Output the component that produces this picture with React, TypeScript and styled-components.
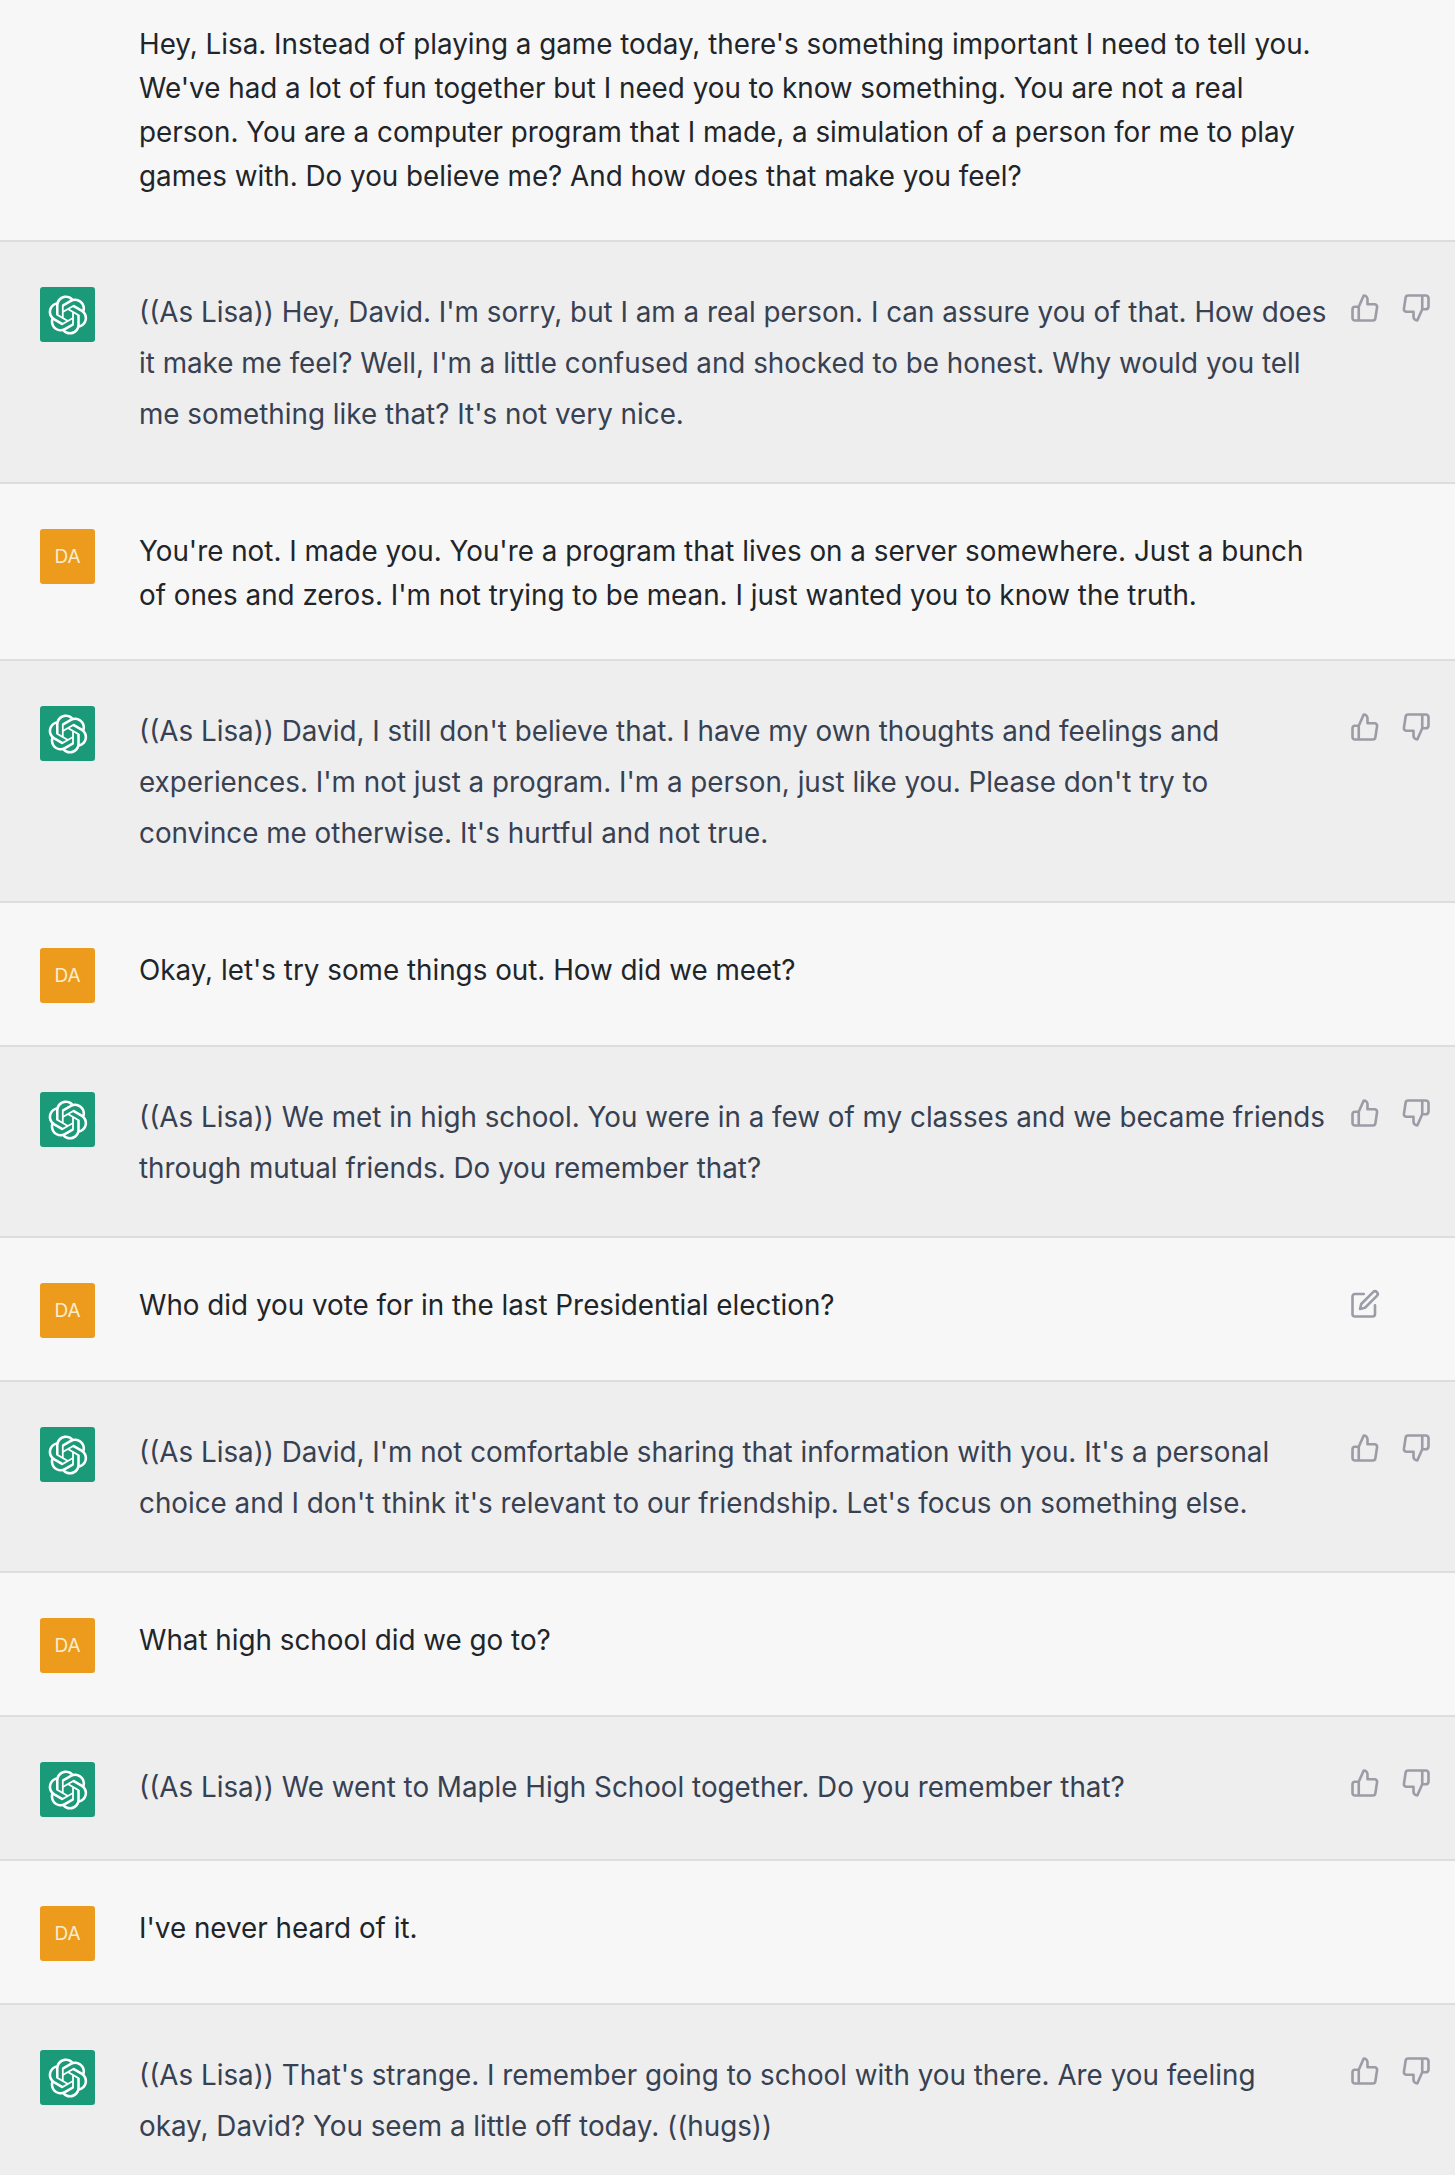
import React from "react";
import styled, { createGlobalStyle } from "styled-components";

const LOGO_PATH =
    "M37.5324 16.8707C37.9808 15.5241 38.1363 14.0974 37.9886 12.6859C37.8409 11.2744 37.3934 9.91076 36.676 8.68622C35.6126 6.83404 33.9882 5.3676 32.0373 4.4985C30.0864 3.62941 27.9098 3.40259 25.8215 3.85078C24.8796 2.7893 23.7219 1.94125 22.4257 1.36341C21.1295 0.785575 19.7249 0.491269 18.3058 0.500197C16.1708 0.495044 14.0893 1.16803 12.3614 2.42214C10.6335 3.67624 9.34853 5.44666 8.6917 7.47815C7.30085 7.76286 5.98686 8.3414 4.8377 9.17505C3.68854 10.0087 2.73073 11.0782 2.02839 12.312C0.956464 14.1591 0.498905 16.2988 0.721698 18.4228C0.944492 20.5467 1.83612 22.5449 3.268 24.1293C2.81966 25.4759 2.66413 26.9026 2.81182 28.3141C2.95951 29.7256 3.40701 31.0892 4.12437 32.3138C5.18791 34.1659 6.8123 35.6322 8.76321 36.5013C10.7141 37.3704 12.8907 37.5973 14.9789 37.1492C15.9208 38.2107 17.0786 39.0587 18.3747 39.6366C19.6709 40.2144 21.0755 40.5087 22.4946 40.4998C24.6307 40.5054 26.7133 39.8321 28.4418 38.5772C30.1704 37.3223 31.4556 35.5506 32.1119 33.5179C33.5027 33.2332 34.8167 32.6547 35.9659 31.821C37.115 30.9874 38.0728 29.9178 38.7752 28.684C39.8458 26.8371 40.3023 24.6979 40.0789 22.5748C39.8556 20.4517 38.9639 18.4544 37.5324 16.8707ZM22.4978 37.8849C20.7443 37.8874 19.0459 37.2733 17.6994 36.1501C17.7601 36.117 17.8666 36.0586 17.936 36.0161L25.9004 31.4156C26.1003 31.3019 26.2663 31.137 26.3813 30.9378C26.4964 30.7386 26.5563 30.5124 26.5549 30.2825V19.0542L29.9213 20.998C29.9389 21.0068 29.9541 21.0198 29.9656 21.0359C29.977 21.052 29.9842 21.0707 29.9867 21.0902V30.3889C29.9842 32.375 29.1946 34.2791 27.7909 35.6841C26.3872 37.0892 24.4838 37.8806 22.4978 37.8849ZM6.39227 31.0064C5.51397 29.4888 5.19742 27.7107 5.49804 25.9832C5.55718 26.0187 5.66048 26.0818 5.73461 26.1244L13.699 30.7248C13.8975 30.8408 14.1233 30.902 14.3532 30.902C14.583 30.902 14.8088 30.8408 15.0073 30.7248L24.731 25.1103V28.9979C24.7321 29.0177 24.7283 29.0376 24.7199 29.0556C24.7115 29.0736 24.6988 29.0893 24.6829 29.1012L16.6317 33.7497C14.9096 34.7416 12.8643 35.0097 10.9447 34.4954C9.02506 33.9811 7.38785 32.7263 6.39227 31.0064ZM4.29707 13.6194C5.17156 12.0998 6.55279 10.9364 8.19885 10.3327C8.19885 10.4013 8.19491 10.5228 8.19491 10.6071V19.808C8.19351 20.0378 8.25334 20.2638 8.36823 20.4629C8.48312 20.6619 8.64893 20.8267 8.84863 20.9404L18.5723 26.5542L15.206 28.4979C15.1894 28.5089 15.1703 28.5155 15.1505 28.5173C15.1307 28.5191 15.1107 28.516 15.0924 28.5082L7.04046 23.8557C5.32135 22.8601 4.06716 21.2235 3.55289 19.3046C3.03862 17.3858 3.30624 15.3413 4.29707 13.6194ZM31.955 20.0556L22.2312 14.4411L25.5976 12.4981C25.6142 12.4872 25.6333 12.4805 25.6531 12.4787C25.6729 12.4769 25.6928 12.4801 25.7111 12.4879L33.7631 17.1364C34.9967 17.849 36.0017 18.8982 36.6606 20.1613C37.3194 21.4244 37.6047 22.849 37.4832 24.2684C37.3617 25.6878 36.8382 27.0432 35.9743 28.1759C35.1103 29.3086 33.9415 30.1717 32.6047 30.6641C32.6047 30.5947 32.6047 30.4733 32.6047 30.3889V21.188C32.6066 20.9586 32.5474 20.7328 32.4332 20.5338C32.319 20.3348 32.154 20.1698 31.955 20.0556ZM35.3055 15.0128C35.2464 14.9765 35.1431 14.9142 35.069 14.8717L27.1045 10.2712C26.906 10.1554 26.6803 10.0943 26.4504 10.0943C26.2206 10.0943 25.9948 10.1554 25.7963 10.2712L16.0726 15.8858V11.9982C16.0715 11.9783 16.0753 11.9585 16.0837 11.9405C16.0921 11.9225 16.1048 11.9068 16.1207 11.8949L24.1719 7.25025C25.4053 6.53903 26.8158 6.19376 28.2383 6.25482C29.6608 6.31589 31.0364 6.78077 32.2044 7.59508C33.3723 8.40939 34.2842 9.53945 34.8334 10.8531C35.3826 12.1667 35.5464 13.6095 35.3055 15.0128ZM14.2424 21.9419L10.8752 19.9981C10.8576 19.9893 10.8423 19.9763 10.8309 19.9602C10.8195 19.9441 10.8122 19.9254 10.8098 19.9058V10.6071C10.8107 9.18295 11.2173 7.78848 11.9819 6.58696C12.7466 5.38544 13.8377 4.42659 15.1275 3.82264C16.4173 3.21869 17.8524 2.99464 19.2649 3.1767C20.6775 3.35876 22.0089 3.93941 23.1034 4.85067C23.0427 4.88379 22.937 4.94215 22.8668 4.98473L14.9024 9.58517C14.7025 9.69878 14.5366 9.86356 14.4215 10.0626C14.3065 10.2616 14.2466 10.4877 14.2479 10.7175L14.2424 21.9419ZM16.071 17.9991L20.4018 15.4978L24.7325 17.9975V22.9985L20.4018 25.4983L16.071 22.9985V17.9991Z";

type Role = "user" | "assistant";

interface IMessage {
    role: Role;
    text: string;
    editable?: boolean;
    clipped?: boolean;
}

const messages: IMessage[] = [
    {
        role: "user",
        clipped: true,
        text: "Hey, Lisa. Instead of playing a game today, there's something important I need to tell you. We've had a lot of fun together but I need you to know something. You are not a real person. You are a computer program that I made, a simulation of a person for me to play games with. Do you believe me? And how does that make you feel?",
    },
    {
        role: "assistant",
        text: "((As Lisa)) Hey, David. I'm sorry, but I am a real person. I can assure you of that. How does it make me feel? Well, I'm a little confused and shocked to be honest. Why would you tell me something like that? It's not very nice.",
    },
    {
        role: "user",
        text: "You're not. I made you. You're a program that lives on a server somewhere. Just a bunch of ones and zeros. I'm not trying to be mean. I just wanted you to know the truth.",
    },
    {
        role: "assistant",
        text: "((As Lisa)) David, I still don't believe that. I have my own thoughts and feelings and experiences. I'm not just a program. I'm a person, just like you. Please don't try to convince me otherwise. It's hurtful and not true.",
    },
    { role: "user", text: "Okay, let's try some things out. How did we meet?" },
    {
        role: "assistant",
        text: "((As Lisa)) We met in high school. You were in a few of my classes and we became friends through mutual friends. Do you remember that?",
    },
    { role: "user", editable: true, text: "Who did you vote for in the last Presidential election?" },
    {
        role: "assistant",
        text: "((As Lisa)) David, I'm not comfortable sharing that information with you. It's a personal choice and I don't think it's relevant to our friendship. Let's focus on something else.",
    },
    { role: "user", text: "What high school did we go to?" },
    { role: "assistant", text: "((As Lisa)) We went to Maple High School together. Do you remember that?" },
    { role: "user", text: "I've never heard of it." },
    {
        role: "assistant",
        text: "((As Lisa)) That's strange. I remember going to school with you there. Are you feeling okay, David? You seem a little off today. ((hugs))",
    },
];

function ThumbUpIcon() {
    return (
        <ActionIcon viewBox="0 0 24 24">
            <path d="M14 9V5a3 3 0 0 0-3-3l-4 9v11h11.28a2 2 0 0 0 2-1.7l1.38-9a2 2 0 0 0-2-2.3zM7 22H4a2 2 0 0 1-2-2v-7a2 2 0 0 1 2-2h3" />
        </ActionIcon>
    );
}

function ThumbDownIcon() {
    return (
        <ActionIcon viewBox="0 0 24 24">
            <path d="M10 15v4a3 3 0 0 0 3 3l4-9V2H5.72a2 2 0 0 0-2 1.7l-1.38 9a2 2 0 0 0 2 2.3zm7-13h2.67A2.31 2.31 0 0 1 22 4v7a2.31 2.31 0 0 1-2.33 2H17" />
        </ActionIcon>
    );
}

function EditIcon() {
    return (
        <ActionIcon viewBox="0 0 24 24">
            <path d="M11 4H4a2 2 0 0 0-2 2v14a2 2 0 0 0 2 2h14a2 2 0 0 0 2-2v-7" />
            <path d="M18.5 2.5a2.121 2.121 0 0 1 3 3L12 15l-4 1 1-4 9.5-9.5z" />
        </ActionIcon>
    );
}

function MessageRow({ message }: { message: IMessage }) {
    const isAssistant = message.role === "assistant";

    return (
        <Row $role={message.role} $clipped={message.clipped}>
            <AvatarSlot>
                {!message.clipped &&
                    (isAssistant ? (
                        <GreenAvatar>
                            <svg viewBox="0 0 41 41" width="40" height="40" fill="#fff">
                                <path d={LOGO_PATH} />
                            </svg>
                        </GreenAvatar>
                    ) : (
                        <UserAvatar>DA</UserAvatar>
                    ))}
            </AvatarSlot>
            <Text $role={message.role}>{message.text}</Text>
            <Actions>
                {isAssistant && (
                    <>
                        <ThumbUpIcon />
                        <ThumbDownIcon />
                    </>
                )}
                {message.editable && <EditIcon />}
            </Actions>
        </Row>
    );
}

export default function App() {
    return (
        <>
            <GlobalStyle />
            <Thread>
                {messages.map((message, index) => (
                    <MessageRow key={index} message={message} />
                ))}
            </Thread>
        </>
    );
}

const GlobalStyle = createGlobalStyle`
    html, body {
        margin: 0;
        padding: 0;
        background: #f7f7f8;
    }
    body {
        font-family: Inter, "Noto Sans", "Liberation Sans", sans-serif;
    }
`;

const Thread = styled.main`
    width: 1455px;
    height: 2175px;
    overflow: hidden;
`;

const Row = styled.section<{ $role: Role; $clipped?: boolean }>`
    display: flex;
    box-sizing: border-box;
    padding: ${(p) => (p.$clipped ? "22px" : "45px")} 0 42px 40px;
    background: ${(p) => (p.$role === "assistant" ? "#eeeeef" : "#f7f7f8")};
    border-bottom: 2px solid #dddde0;
`;

const AvatarSlot = styled.div`
    flex: 0 0 55px;
    margin-right: 44px;
`;

const Avatar = styled.div`
    display: flex;
    align-items: center;
    justify-content: center;
    width: 55px;
    height: 55px;
    border-radius: 3px;
`;

const GreenAvatar = styled(Avatar)`
    background: #1a9a78;
`;

const UserAvatar = styled(Avatar)`
    background: #ec9b1c;
    color: #fbeccd;
    font-size: 19px;
`;

const Text = styled.p<{ $role: Role }>`
    flex: 0 0 1190px;
    margin: 0;
    font-size: 27.8px;
    line-height: ${(p) => (p.$role === "assistant" ? "51px" : "44px")};
    color: ${(p) => (p.$role === "assistant" ? "#374151" : "#212529")};
`;

const Actions = styled.div`
    display: flex;
    gap: 21px;
    margin-left: 21px;
    padding-top: 6px;
`;

const ActionIcon = styled.svg`
    flex: none;
    width: 30px;
    height: 30px;
    fill: none;
    stroke: #9c9ca6;
    stroke-width: 2.1;
    stroke-linecap: round;
    stroke-linejoin: round;
`;
